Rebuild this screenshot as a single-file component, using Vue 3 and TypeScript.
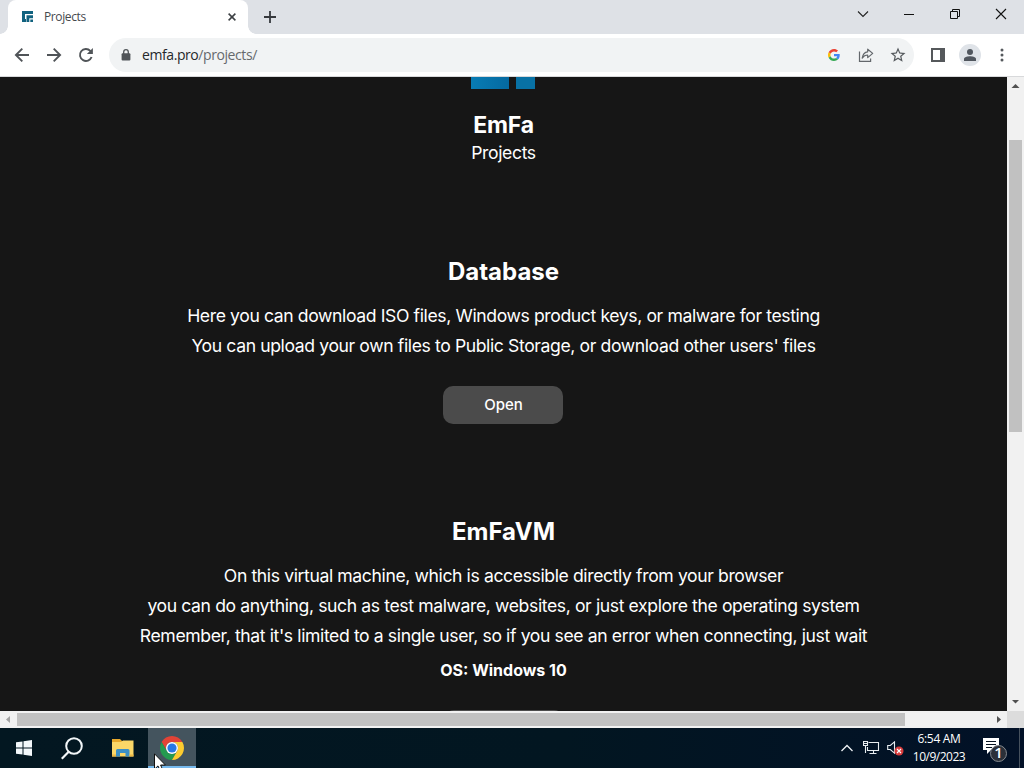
<script setup lang="ts">
interface Project {
  title: string
  lines: string[]
  note?: string
  action?: string
}

const projects: Project[] = [
  {
    title: 'Database',
    lines: [
      'Here you can download ISO files, Windows product keys, or malware for testing',
      "You can upload your own files to Public Storage, or download other users' files",
    ],
    action: 'Open',
  },
  {
    title: 'EmFaVM',
    lines: [
      'On this virtual machine, which is accessible directly from your browser',
      'you can do anything, such as test malware, websites, or just explore the operating system',
      "Remember, that it's limited to a single user, so if you see an error when connecting, just wait",
    ],
    note: 'OS: Windows 10',
  },
]
</script>

<template>
  <div class="desktop">
    <header class="tabstrip">
      <div class="tab">
        <svg class="favicon" width="12" height="12" viewBox="0 0 12 12">
          <path d="M0 0H11V3H3V8H4V11H0Z" fill="#11627f" />
          <path d="M4.5 4.3H11V7.2H7.3V11H4.5Z" fill="#11627f" />
          <path d="M8.3 8.5H11V11H8.3Z" fill="#11627f" />
        </svg>
        <span class="tab-title">Projects</span>
        <svg class="tab-close" width="8" height="8" viewBox="0 0 8 8"><path d="M.6 .6L7.4 7.4M7.4 .6L.6 7.4" stroke="#3c4043" stroke-width="1.5" /></svg>
      </div>
      <svg class="new-tab" width="12" height="12" viewBox="0 0 12 12"><path d="M6 0V12M0 6H12" stroke="#36393d" stroke-width="1.8" /></svg>
      <div class="window-controls">
        <svg width="46" height="28" viewBox="0 0 46 28"><path d="M18 11.5L23 16.5L28 11.5" fill="none" stroke="#222" stroke-width="1.1" /></svg>
        <svg width="46" height="28" viewBox="0 0 46 28"><path d="M18 14.5H28" stroke="#111" /></svg>
        <svg width="46" height="28" viewBox="0 0 46 28"><path d="M18.5 11.5H25.5V18.5H18.5ZM20.5 11.5V9.5H27.5V16.5H25.5" fill="none" stroke="#111" /></svg>
        <svg width="46" height="28" viewBox="0 0 46 28"><path d="M18 9L28 19M28 9L18 19" stroke="#111" stroke-width="1.1" /></svg>
      </div>
    </header>

    <nav class="toolbar">
      <svg class="nav-icon" width="16" height="16" viewBox="0 0 16 16"><path d="M15 8H2M8.3 1.6L1.9 8L8.3 14.4" fill="none" stroke="#505458" stroke-width="1.9" /></svg>
      <svg class="nav-icon" width="16" height="16" viewBox="0 0 16 16"><path d="M1 8H14M7.7 1.6L14.1 8L7.7 14.4" fill="none" stroke="#505458" stroke-width="1.9" /></svg>
      <svg class="nav-icon" width="16" height="16" viewBox="0 0 16 16"><path d="M13.6 10A6 6 0 1 1 12.3 3.8L13.2 4.7" fill="none" stroke="#505458" stroke-width="1.9" /><path d="M14.9 1V7H8.9Z" fill="#505458" /></svg>
      <div class="omnibox">
        <svg class="lock" width="10" height="12" viewBox="0 0 10 12"><rect x=".6" y="4.2" width="8.8" height="7.3" rx="1" fill="#505458" /><path d="M2.7 5V3A2.3 2.3 0 0 1 7.3 3V5" fill="none" stroke="#505458" stroke-width="1.3" /></svg>
        <span class="url">emfa.pro<span class="path">/projects/</span></span>
        <svg class="google" width="12" height="12" viewBox="0 0 48 48">
          <path fill="#ea4335" d="M24 9.5c3.54 0 6.71 1.22 9.21 3.6l6.85-6.85C35.9 2.38 30.47 0 24 0 14.62 0 6.51 5.38 2.56 13.22l7.98 6.19C12.43 13.72 17.74 9.5 24 9.5z" />
          <path fill="#4285f4" d="M46.98 24.55c0-1.57-.15-3.09-.38-4.55H24v9.02h12.94c-.58 2.96-2.26 5.48-4.78 7.18l7.73 6c4.51-4.18 7.09-10.36 7.09-17.65z" />
          <path fill="#fbbc05" d="M10.53 28.59c-.48-1.45-.76-2.99-.76-4.59s.27-3.14.76-4.59l-7.98-6.19C.92 16.46 0 20.12 0 24c0 3.88.92 7.54 2.56 10.78z" />
          <path fill="#34a853" d="M24 48c6.48 0 11.93-2.13 15.89-5.81l-7.73-6c-2.15 1.45-4.92 2.3-8.16 2.3-6.26 0-11.57-4.22-13.47-9.91l-7.98 6.19C6.51 42.62 14.62 48 24 48z" />
        </svg>
        <svg class="share" width="16" height="16" viewBox="0 0 16 16"><path d="M1.5 4.5V14.3H12.6V11.5" fill="none" stroke="#63676b" stroke-width="1.2" /><path d="M4.2 11.2C4.7 7.4 6.6 5.1 9.7 4.8V2.2L14.7 6.4L9.7 10.6V8C7.2 8 5.6 9 4.2 11.2Z" fill="none" stroke="#63676b" stroke-width="1.2" stroke-linejoin="round" /></svg>
        <svg class="star" width="18" height="18" viewBox="0 0 24 24"><path fill="#55595d" d="M22 9.24l-7.19-.62L12 2 9.19 8.63 2 9.24l5.46 4.73L5.82 21 12 17.27 18.18 21l-1.63-7.03L22 9.24zM12 15.4l-3.76 2.27 1-4.28-3.32-2.88 4.38-.38L12 6.1l1.71 4.04 4.38.38-3.32 2.88 1 4.28L12 15.4z" /></svg>
      </div>
      <svg class="panel" width="14" height="14" viewBox="0 0 14 14"><path d="M0 0H14V14H0ZM2 2V12H9V2Z" fill="#55585b" fill-rule="evenodd" /></svg>
      <div class="avatar">
        <svg width="14" height="14" viewBox="0 0 14 14"><circle cx="7" cy="4" r="3" fill="#50565e" /><path d="M1 13V11C1 9 4.5 8.2 7 8.2S13 9 13 11V13Z" fill="#50565e" /></svg>
      </div>
      <svg class="kebab" width="4" height="14" viewBox="0 0 4 14"><g fill="#55595d"><circle cx="2" cy="2" r="1.5" /><circle cx="2" cy="7" r="1.5" /><circle cx="2" cy="12" r="1.5" /></g></svg>
    </nav>

    <div class="viewport">
      <main class="page">
        <div class="logo"><i></i><i></i></div>
        <h1>EmFa</h1>
        <p class="subtitle">Projects</p>
        <section v-for="project in projects" :key="project.title" class="project">
          <h2>{{ project.title }}</h2>
          <p v-for="(line, i) in project.lines" :key="i" class="line">{{ line }}</p>
          <p v-if="project.note" class="note">{{ project.note }}</p>
          <button>{{ project.action }}</button>
        </section>
      </main>
      <div class="vscroll">
        <svg width="17" height="17" viewBox="0 0 17 17"><path d="M4.5 11L8.5 7L12.5 11Z" fill="#505050" /></svg>
        <div class="vthumb"></div>
        <svg class="down" width="17" height="17" viewBox="0 0 17 17"><path d="M5 6L8.5 9.5L12 6Z" fill="#505050" /></svg>
      </div>
      <div class="hscroll">
        <svg width="17" height="17" viewBox="0 0 17 17"><path d="M10 5V12L6 8.5Z" fill="#a3a3a3" /></svg>
        <div class="hthumb"></div>
        <svg class="right" width="17" height="17" viewBox="0 0 17 17"><path d="M7 5V12L11 8.5Z" fill="#505050" /></svg>
      </div>
      <div class="corner"></div>
    </div>

    <footer class="taskbar">
      <div class="task"><svg width="16" height="16" viewBox="0 0 16 16"><path d="M0 2.3L6.5 1.4V7.5H0ZM7.5 1.2L16 0V7.5H7.5ZM0 8.5H6.5V14.6L0 13.7ZM7.5 8.5H16V16L7.5 14.8Z" fill="#f4f8fb" /></svg></div>
      <div class="task"><svg width="24" height="24" viewBox="0 0 24 24"><circle cx="14" cy="10" r="7.8" fill="none" stroke="#f2f6f8" stroke-width="2" /><path d="M8.7 15.8L1.8 22.8" stroke="#f2f6f8" stroke-width="2.2" /></svg></div>
      <div class="task files">
        <svg width="22" height="18" viewBox="0 0 22 18"><path d="M0 0H8L10 2H21V17H0Z" fill="#e8a92c" /><path d="M0 3H9L11 1.5H21.5V17.5H0Z" fill="#fbd768" /><path d="M4 17.5V11.5Q4 10 5.5 10H16Q17.5 10 17.5 11.5V17.5H13.5V14H8V17.5Z" fill="#3b8fc5" /><path d="M0 15.5H4V17.5H0ZM17.5 15.5H21.5V17.5H17.5Z" fill="#edb844" /></svg>
      </div>
      <div class="task active">
        <svg width="24" height="24" viewBox="0 0 48 48">
          <path d="M13.61 30L3.22 12A24 24 0 0 1 44.78 12H24A12 12 0 0 0 13.61 30Z" fill="#e24336" />
          <path d="M34.39 30L24 48A24 24 0 0 1 3.22 12L13.61 30A12 12 0 0 0 34.39 30Z" fill="#249a50" />
          <path d="M24 12H44.78A24 24 0 0 1 24 48L34.39 30A12 12 0 0 0 24 12Z" fill="#fccb2f" />
          <circle cx="24" cy="24" r="12" fill="#fff" /><circle cx="24" cy="24" r="9.2" fill="#2878e4" />
        </svg>
      </div>
      <div class="tray">
        <svg class="chevron" width="12" height="8" viewBox="0 0 12 8"><path d="M.5 7L6 1.5L11.5 7" fill="none" stroke="#eef2f5" stroke-width="1.3" /></svg>
        <svg class="network" width="17" height="14" viewBox="0 0 17 14"><path d="M5.5 1.5H15.5V9.5H4.5V6M.5 .5H4.5V4.5H.5ZM2.5 4.5V12M10.5 9.5V12.5M6.5 12.5H13.5M1 2.5H4" fill="none" stroke="#e8edf0" stroke-width="1.1" /></svg>
        <svg class="volume" width="17" height="15" viewBox="0 0 17 15"><path d="M.7 4.5H3.3L7.5 .9V12.1L3.3 8.5H.7Z" fill="none" stroke="#e8edf0" stroke-width="1.1" /><circle cx="12" cy="10" r="4.5" fill="#d83c3c" /><path d="M10 8L14 12M14 8L10 12" stroke="#fff" stroke-width="1.1" /></svg>
        <div class="clock"><span>6:54 AM</span><span class="date">10/9/2023</span></div>
        <svg class="notify" width="26" height="26" viewBox="0 0 26 26"><path d="M1 1H17V13H9L5 17V13H1Z" fill="#fff" /><path d="M4 4.5H14M4 7.5H14M4 10.5H10" stroke="#071421" stroke-width="1.1" /><circle cx="16.5" cy="16.5" r="8" fill="#2b3039" stroke="#858a90" /><text x="16.5" y="21" text-anchor="middle">1</text></svg>
      </div>
      <div class="peek"></div>
    </footer>

    <svg class="cursor" width="13" height="20" viewBox="0 0 13 20"><path d="M.5 .8V16.2L4 12.9L6.5 18.6L9 17.5L6.6 12H11.4Z" fill="#fff" stroke="#111" /></svg>
  </div>
</template>

<style>
body { margin: 0; overflow: hidden; }
</style>

<style scoped>
* { box-sizing: border-box; }
svg { display: block; flex: none; }
.desktop { position: relative; width: 1024px; height: 768px; display: flex; flex-direction: column; overflow: hidden; font-family: "Open Sans", "Noto Sans", sans-serif; }

.tabstrip { height: 34px; flex: none; background: #dee1e6; display: flex; align-items: flex-start; padding-left: 8px; }
.tab { position: relative; width: 240px; height: 34px; background: #fff; border-radius: 8px 8px 0 0; display: flex; align-items: center; padding: 0 12px 0 14px; }
.tab::before, .tab::after { content: ""; position: absolute; bottom: 0; width: 8px; height: 8px; }
.tab::before { left: -8px; background: radial-gradient(circle at 0 0, transparent 7.5px, #fff 8px); }
.tab::after { right: -8px; background: radial-gradient(circle at 100% 0, transparent 7.5px, #fff 8px); }
.tab-title { margin-left: 10px; margin-top: -1px; font-size: 12px; color: #45494d; letter-spacing: -0.38px; }
.tab-close { margin-left: auto; }
.new-tab { margin: 11px 0 0 16px; }
.window-controls { display: flex; margin-left: auto; }

.toolbar { height: 43px; flex: none; background: #fff; border-bottom: 1px solid #d8d9db; display: flex; align-items: center; padding-left: 14px; }
.nav-icon { margin-right: 16px; }
.omnibox { width: 805px; height: 34px; margin-left: -1px; border-radius: 17px; background: #f1f3f4; display: flex; align-items: center; padding: 0 7px 0 12px; }
.url { margin-left: 11px; margin-top: -1px; font-size: 14px; color: #25282b; letter-spacing: -0.42px; }
.path { color: #66696d; }
.google { margin-left: auto; }
.share { margin-left: 18px; }
.star { margin-left: 15px; }
.panel { margin-left: 17px; }
.avatar { width: 22px; height: 22px; border-radius: 50%; margin-left: 14px; background: #dfe3e8; display: flex; align-items: center; justify-content: center; }
.kebab { margin-left: 19px; }

.viewport { height: 651px; flex: none; display: grid; grid-template: 634px 17px / 1007px 17px; }
.page { background: #161616; color: #fff; overflow: hidden; font-family: Inter, sans-serif; display: flex; flex-direction: column; align-items: center; }
.logo { display: flex; gap: 7px; flex: none; height: 12px; margin-right: 1px; }
.logo i { width: 38px; background: linear-gradient(90deg, #087cb4, #0569a0); }
.logo i + i { width: 19px; background: #0871a4; }
h1, h2, p { margin: 0; flex: none; white-space: nowrap; text-align: center; }
h1 { margin-top: 21px; font-size: 23px; line-height: 30px; font-weight: 700; letter-spacing: -0.2px; }
.subtitle { font-size: 17.6px; line-height: 26px; margin-bottom: 1px; letter-spacing: -0.38px; }
.project { flex: none; display: flex; flex-direction: column; align-items: center; margin-top: 90px; }
.project + .project { margin-top: 93px; }
h2 { font-size: 24px; line-height: 30px; font-weight: 700; margin-bottom: 14px; }
.line { font-size: 17.6px; line-height: 30px; letter-spacing: -0.39px; }
.note { font-size: 16px; line-height: 30px; margin-top: 4px; font-weight: 700; }
button { width: 120px; height: 38px; flex: none; margin-top: 25px; border: 0; border-radius: 10px; background: #4b4b4b; color: #fff; font: 500 15px/38px Inter, sans-serif; padding: 0; }

.vscroll { background: #f1f1f1; display: flex; flex-direction: column; align-items: center; }
.vthumb { width: 13px; height: 292px; margin-top: 46px; background: #c1c1c1; }
.down { margin-top: auto; }
.hscroll { background: #f1f1f1; display: flex; align-items: center; }
.hthumb { width: 888px; height: 13px; background: #c1c1c1; }
.right { margin-left: auto; }
.corner { background: #dcdcdc; }

.taskbar { height: 40px; flex: none; background: linear-gradient(90deg, #031721 0%, #021621 55%, #021127 100%); display: flex; }
.task { width: 48px; height: 40px; display: flex; align-items: center; justify-content: center; }
.files { width: 52px; padding-left: 2px; }
.active { background: #44545e; border-bottom: 2px solid #76b9ed; }
.active svg { margin-top: 2px; }
.tray { margin-left: auto; display: flex; align-items: center; color: #fff; }
.network { margin-left: 10px; }
.volume { margin-left: 7px; }
.clock { width: 60px; margin-left: 5px; display: flex; flex-direction: column; text-align: center; font-size: 12px; line-height: 18px; letter-spacing: -0.3px; }
.date { letter-spacing: -0.5px; }
.notify { margin-left: 13px; margin-top: 3px; }
.notify text { font: 600 15px "Open Sans", sans-serif; fill: #fff; }
.peek { width: 5px; margin-left: 11px; border-left: 1px solid #46515d; }
.cursor { position: absolute; left: 154px; top: 753px; }
</style>
